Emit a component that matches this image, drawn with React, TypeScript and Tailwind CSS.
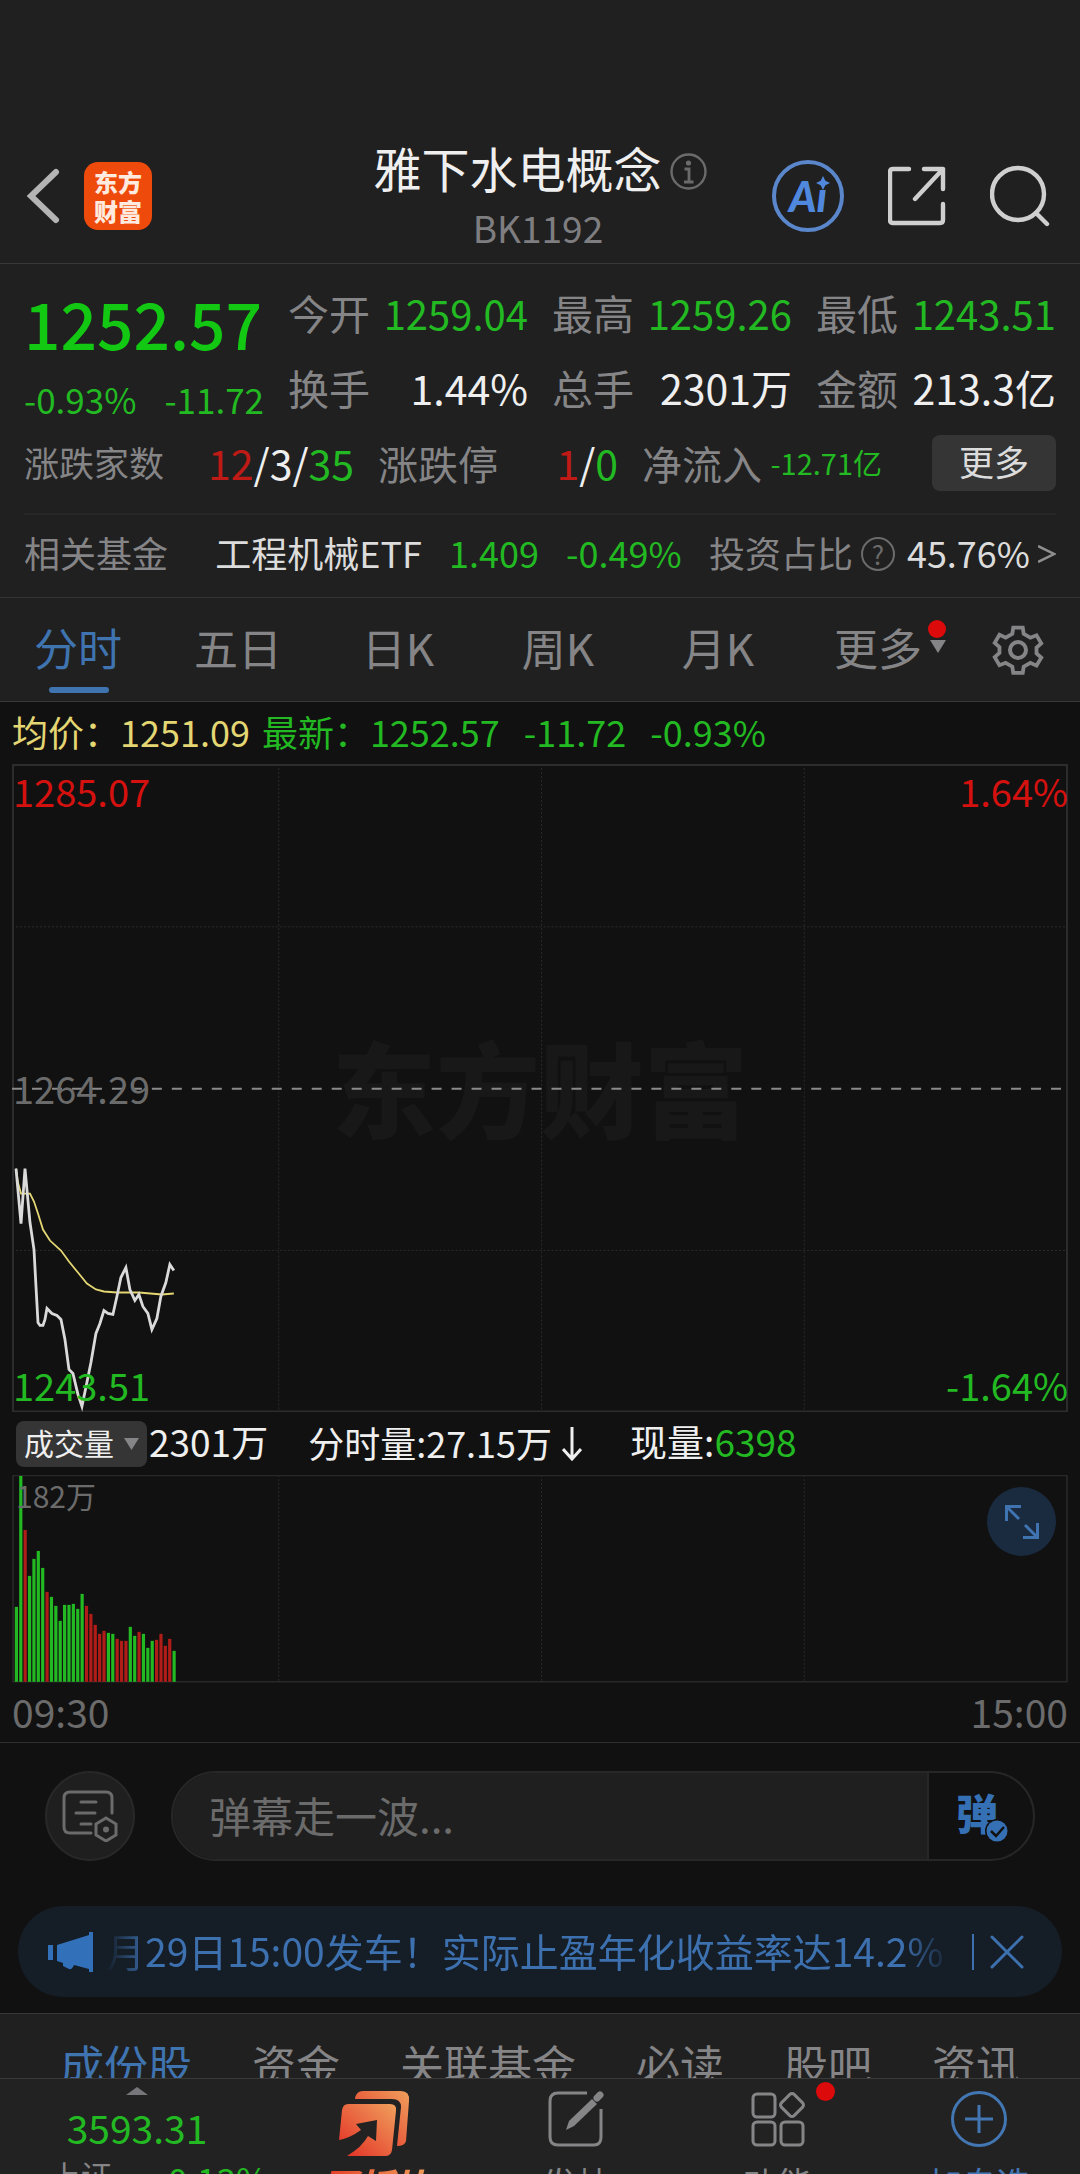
import { useState } from 'react';

const GREEN = '#22b922';
const RED = '#b01c17';

// minute volumes, in chart units (full height = 207)
const volumes = [
  75, 206, 152, 106, 123, 131, 114, 90, 85, 76, 61, 77, 77, 78, 73, 88, 76, 68, 57, 48, 51, 49, 48, 43, 41, 41, 55, 46,
  50, 48, 34, 41, 42, 48, 36, 43, 31,
];
const volumeSides = 'ggrggggrggggggggrrrrrggrrrggrgggrrrrg';

const quotes = [
  { label: '今开', value: '1259.04', color: 'text-[40px] text-[#22b922]' },
  { label: '最高', value: '1259.26', color: 'text-[40px] text-[#22b922]' },
  { label: '最低', value: '1243.51', color: 'text-[40px] text-[#22b922]' },
  { label: '换手', value: '1.44%', color: 'text-[#efefef]' },
  { label: '总手', value: '2301万', color: 'text-[#efefef]' },
  { label: '金额', value: '213.3亿', color: 'text-[#efefef]' },
];

const periods = ['分时', '五日', '日K', '周K', '月K'];
const sections = ['成份股', '资金', '关联基金', '必读', '股吧', '资讯'];

function Header() {
  return (
    <header className="grid grid-cols-[1fr_auto_1fr] items-center border-b border-[#383838] px-6 pt-[135px] pb-2">
      <div className="flex items-center gap-6 pt-0.5">
        <button aria-label="返回" className="text-[#b4b4b4]">
          <svg width="36" height="56" viewBox="0 0 36 56" fill="none" stroke="currentColor" strokeWidth="6" strokeLinecap="round">
            <path d="M32 4 7 28l25 24" />
          </svg>
        </button>
        <a href="#" className="grid size-[68px] place-content-center rounded-[14px] bg-[#ee4a0b] text-center text-[24px] leading-[29px] font-black text-[#ffeadf]">
          东方
          <br />
          财富
        </a>
      </div>
      <div className="text-center">
        <h1 className="flex items-center gap-2 text-[48px] leading-[64px] text-[#efefef]">
          雅下水电概念
          <svg className="mt-2" width="37" height="37" viewBox="0 0 37 37" fill="none" stroke="#6b6b6b" strokeWidth="2.4">
            <circle cx="18.500" cy="18.500" r="17" />
            <circle cx="18.500" cy="10" r="2.600" fill="#6b6b6b" stroke="none" />
            <path d="M14.500 16h4.500v12.500M14 29h9.500" strokeWidth="2.800" />
          </svg>
        </h1>
        <p className="pr-1 text-[37px] leading-[56px] text-[#7e7e80]">BK1192</p>
      </div>
      <div className="flex items-center justify-end gap-11 pt-0.5 pr-1.5">
        <button className="relative grid size-[72px] place-content-center rounded-full border-4 border-[#5a86cc] font-[Lato] text-[42px] leading-none font-black text-[#5088de] italic">
          Aı
          <svg className="absolute top-3 right-2.5" width="14" height="14" viewBox="0 0 12 12" fill="currentColor">
            <path d="M6 0 8 4l4 2-4 2-2 4-2-4-4-2 4-2z" />
          </svg>
        </button>
        <button aria-label="分享" className="text-[#cfcfcf]">
          <svg width="58" height="60" viewBox="0 0 58 60" fill="none" stroke="currentColor" strokeWidth="4.400" strokeLinecap="round" strokeLinejoin="round">
            <path d="M21 3H5q-3 0-3 3v48q0 3 3 3h47q3 0 3-3V38M36 3h19v20M55 3 27 33" />
          </svg>
        </button>
        <button aria-label="搜索" className="text-[#cfcfcf]">
          <svg width="60" height="62" viewBox="0 0 60 62" fill="none" stroke="currentColor" strokeWidth="4.400" strokeLinecap="round">
            <circle cx="28" cy="29" r="26" />
            <path d="M46 48 57 59" />
          </svg>
        </button>
      </div>
    </header>
  );
}

function Summary() {
  return (
    <section className="border-b border-[#333] px-6 pt-[11px]">
      <div className="grid grid-cols-4 gap-x-6">
        <div className="row-span-2 pt-[7px] whitespace-nowrap">
          <div className="text-[64px] leading-[80px] font-medium text-[#12c812]">1252.57</div>
          <div className="mt-2 flex justify-between pt-1 text-[35px] leading-[50px] text-[#22b922]">
            <span>-0.93%</span>
            <span>-11.72</span>
          </div>
        </div>
        {quotes.map((q) => (
          <div key={q.label} className="flex h-[75px] items-center justify-between text-[41px] whitespace-nowrap">
            <span className="text-[#858587]">{q.label}</span>
            <span className={q.color}>{q.value}</span>
          </div>
        ))}
      </div>
      <div className="grid h-[75px] grid-cols-[11fr_8fr_8fr_5fr] items-center gap-x-6 text-[41px] whitespace-nowrap">
        <div className="flex items-center justify-between">
          <span className="text-[35px] text-[#858587]">涨跌家数</span>
          <span className="text-[#efefef]">
            <span className="text-[#c01a16]">12</span>/3/<span className="text-[#22b922]">35</span>
          </span>
        </div>
        <div className="flex items-center justify-between">
          <span className="text-[40px] text-[#858587]">涨跌停</span>
          <span className="text-[#efefef]">
            <span className="text-[#c01a16]">1</span>/<span className="text-[#22b922]">0</span>
          </span>
        </div>
        <div className="flex items-center justify-between">
          <span className="text-[40px] text-[#858587]">净流入</span>
          <span className="text-[29px] text-[#22b922]">-12.71亿</span>
        </div>
        <button className="h-[56px] w-[124px] justify-self-end rounded-lg bg-[#353535] pb-1 text-[35px] leading-[48px] text-[#dcdcdc]">更多</button>
      </div>
      <div className="mt-[13px] flex h-[84px] items-center justify-between border-t-2 border-[#272727] pb-2 text-[36px] whitespace-nowrap">
        <span className="mr-5 text-[#858587]">相关基金</span>
        <a href="#" className="text-[#dcdcdc]">工程机械ETF</a>
        <span className="text-[#22b922]">1.409</span>
        <span className="text-[#22b922]">-0.49%</span>
        <span className="flex items-center gap-2 text-[#dcdcdc]">
          <span className="text-[#858587]">投资占比</span>
          <span className="mt-1 mr-1 grid size-[34px] place-content-center rounded-full border-2 border-[#6b6b6b] text-[26px] leading-none text-[#6b6b6b]">?</span>
          45.76%
          <svg className="mt-1" width="18" height="18" viewBox="0 0 18 18" fill="none" stroke="#8e8e8e" strokeWidth="2.500">
            <path d="m0 1 16 8-16 8" />
          </svg>
        </span>
      </div>
    </section>
  );
}

function PeriodTabs() {
  const [active, setActive] = useState('分时');
  return (
    <nav className="grid h-[104px] grid-cols-[repeat(6,4fr)_3fr] border-b border-[#383838] text-[44px] text-[#858587]">
      {periods.map((p) => (
        <button key={p} onClick={() => setActive(p)} className={p === active ? 'relative pr-1 pb-1.5 text-[#3f74b0]' : 'pr-1 pb-1.5'}>
          {p}
          {p === active && <span className="absolute bottom-2 left-[49px] h-1.5 w-[60px] rounded-full bg-[#3f74b0]" />}
        </button>
      ))}
      <button className="relative flex items-center justify-center gap-2 pb-1.5 pl-5 whitespace-nowrap">
        更多
        <svg width="16" height="13" viewBox="0 0 16 13" fill="currentColor">
          <path d="M0 0h16L8 13z" />
        </svg>
        <span className="absolute top-[22px] right-3.5 size-[18px] rounded-full bg-[#dc0a0a]" />
      </button>
      <button aria-label="设置" className="flex items-center justify-center pr-1">
        <svg width="52" height="52" viewBox="0 0 52 52" fill="none" stroke="currentColor" strokeWidth="4">
          <path d="M21 2.500h10l1 6.500 7 4 6.500-2.500 5 8.500-5 4.500v6l5 4.500-5 8.500L39 39.500l-7 4-1 6.500H21l-1-6.500-7-4-6.500 2.500-5-8.500 5-4.500v-6l-5-4.500 5-8.500L13 13l7-4z" transform="translate(1.300 1.300) scale(.95)" />
          <circle cx="26" cy="26" r="8" />
        </svg>
      </button>
    </nav>
  );
}

function PriceChart() {
  return (
    <div className="relative mx-3 text-[38px] leading-[50px]">
      <div className="absolute inset-0 flex items-center justify-center pb-1 text-[104px] leading-none font-black text-[#181818]">东方财富</div>
      <svg className="relative block w-full" viewBox="0 0 1057 649" fill="none">
        <g stroke="#2b2b2b" strokeWidth="2" strokeDasharray="2 2">
          <path d="M0 163h1057M0 487h1057M267 0v649M530 0v649M793 0v649" strokeWidth="1" />
        </g>
        <path d="M1 1h1055v647H1z" stroke="#2d2d2d" strokeWidth="2" />
        <path d="M0 325h1057" stroke="#8a8a8a" strokeWidth="2" strokeDasharray="10 10" />
        {/* average price */}
        <path
          d="M4 405 6 419 9 430 18 430 22 438 26 450 31 466 38 477 49 487 57 498 66 509 75 520 84 526 92 528 105 529 114 529 127 529 150 531 162 530"
          stroke="#e3d673"
          strokeWidth="1.800"
        />
        {/* last price */}
        <path
          d="M4 405 9 460 13 405 18 459 22 486 24 523 26 559 28 562 31 562 33 556 35 545 40 550 45 552 49 556 53 576 57 606 61 610 66 631 70 643 75 619 79 599 84 570 88 560 92 547 96 550 101 551 105 533 109 514 114 504 118 526 123 537 127 531 131 543 136 550 140 566 145 555 149 533 154 519 158 501 162 507"
          stroke="#dadada"
          strokeWidth="2.800"
        />
      </svg>
      <span className="absolute top-0.5 left-px text-[#d4110f]">1285.07</span>
      <span className="absolute top-0.5 right-0 text-[#d4110f]">1.64%</span>
      <span className="absolute top-1/2 left-px -translate-y-1/2 text-[#6b6b6b]">1264.29</span>
      <span className="absolute bottom-0.5 left-px text-[#22b922]">1243.51</span>
      <span className="absolute right-0 bottom-0.5 text-[#22b922]">-1.64%</span>
    </div>
  );
}

function VolumeChart() {
  return (
    <>
      <div className="flex h-[63px] items-center px-4 text-[37px] whitespace-nowrap text-[#efefef]">
        <div className="relative mr-0.5">
          <select aria-label="指标" className="block h-[46px] w-[131px] appearance-none rounded-lg bg-[#353535] pb-1 pl-2 text-[30px] leading-[42px]">
            <option>成交量</option>
            <option>成交额</option>
          </select>
          <svg className="pointer-events-none absolute top-[17px] right-2" width="15" height="12" viewBox="0 0 15 12" fill="#858587">
            <path d="M0 0h15L7.500 12z" />
          </svg>
        </div>
        <span className="pb-1">2301万</span>
        <span className="pb-1 pl-10 text-[36px]">分时量:27.15万</span>
        <svg className="ml-2.5" width="20" height="34" viewBox="0 0 20 34" fill="none" stroke="currentColor" strokeWidth="3">
          <path d="M10 0v32M1 22l9 10 9-10" />
        </svg>
        <span className="pb-1 pl-12">
          现量:<span className="text-[#22b922]">6398</span>
        </span>
      </div>
      <div className="relative mx-3">
        <svg className="block w-full" viewBox="0 0 1057 208" fill="none">
          <path d="M267 0v208M530 0v208M793 0v208" stroke="#2b2b2b" strokeDasharray="2 2" />
          <path d="M1 .5h1055v206.500H1z" stroke="#292929" strokeWidth="1.600" />
          {volumes.map((v, i) => (
            <rect key={i} x={2.8 + i * 4.385} y={207 - v} width="3.200" height={v} fill={volumeSides[i] === 'g' ? GREEN : RED} />
          ))}
        </svg>
        <span className="absolute top-0 left-1 text-[30px] leading-[40px] text-[#6b6b6b]">182万</span>
        <button aria-label="全屏" className="absolute top-3 right-3 grid size-[69px] place-content-center rounded-full bg-[#1a2a3f]">
          <svg width="34" height="34" viewBox="0 0 34 34" fill="none" stroke="#3f74b0" strokeWidth="3">
            <path d="M16 1.500H1.500V16M2 2l12 12M18 32.500h14.500V18M32 32 20 20" />
          </svg>
        </button>
      </div>
      <div className="flex h-[60px] justify-between border-b border-[#2f2f2f] px-3 text-[39px] leading-[56px] text-[#6b6b6b]">
        <span>09:30</span>
        <span>15:00</span>
      </div>
    </>
  );
}

function Barrage() {
  return (
    <div className="flex h-[90px] gap-[36px] pr-[45px] pl-[45px]">
      <button aria-label="弹幕设置" className="grid size-[90px] shrink-0 place-content-center rounded-full border-2 border-[#282828] bg-[#1f1f1f]">
        <svg width="56" height="52" viewBox="0 0 56 52" fill="none" stroke="#6b6b6b" strokeWidth="3">
          <path d="M29 43H8q-6 0-6-6V8q0-6 6-6h36q6 0 6 6v15M19 12h15M14 23h19M19 34h10" strokeLinecap="round" />
          <path d="m44 28 10 6v11l-10 6-10-6V34z" />
          <circle cx="44" cy="39.500" r="3" fill="#6b6b6b" stroke="none" />
        </svg>
      </button>
      <form className="flex min-w-0 flex-1 overflow-hidden rounded-full border-2 border-[#272727]">
        <input aria-label="弹幕" placeholder="弹幕走一波..." className="min-w-0 flex-1 bg-[#1f1f1f] pb-1 pl-9 text-[42px] outline-none placeholder:text-[#6b6b6b]" />
        <button type="button" className="relative w-[106px] border-l-2 border-[#272727] pr-2 pb-2 text-[42px] leading-none font-black text-[#3670b4]">
          弹
          <svg className="absolute right-[24px] bottom-4" width="24" height="24" viewBox="0 0 24 24">
            <circle cx="12" cy="12" r="12" fill="#111" />
            <circle cx="12" cy="12" r="10.500" fill="#3670b4" />
            <path d="m6 12 5 5 8-9" stroke="#111" strokeWidth="2.500" fill="none" />
          </svg>
        </button>
      </form>
    </div>
  );
}

function Notice() {
  const [open, setOpen] = useState(true);
  if (!open) return null;
  return (
    <div className="mx-[18px] mt-[45px] mb-4 flex h-[91px] items-center rounded-full bg-[#151d27] pr-[38px] pl-[30px] text-[#3d70ae]">
      <svg className="shrink-0" width="46" height="40" viewBox="0 0 46 40" fill="#3270b9">
        <path d="M0 13h5v15H0zM9 13 41 3V0h4v40h-4v-3l-15-4q-2 5-5 4l-6-3v-3l-6-2z" />
      </svg>
      <p className="ml-3 min-w-0 flex-1 overflow-hidden pb-1 text-[39px] leading-[56px] whitespace-nowrap [mask-image:linear-gradient(to_right,transparent,black_44px,black_calc(100%_-_50px),transparent)]">
        月29日15:00发车！实际止盈年化收益率达14.2%，
      </p>
      <span className="mr-4 ml-5 h-9 w-0.5 bg-[#3d70ae]" />
      <button aria-label="关闭" onClick={() => setOpen(false)}>
        <svg width="34" height="34" viewBox="0 0 34 34" fill="none" stroke="currentColor" strokeWidth="3" strokeLinecap="round">
          <path d="m2 2 30 30M32 2 2 32" />
        </svg>
      </button>
    </div>
  );
}

function BottomBar() {
  return (
    <footer className="grid h-24 shrink-0 grid-cols-[68fr_50fr_50fr_50fr_50fr] overflow-hidden border-t border-[#3a3a3a] bg-[#222] text-[34px] leading-[40px] whitespace-nowrap text-[#858587]">
      <div className="flex flex-col items-center pt-2">
        <svg className="shrink-0" width="22" height="8" viewBox="0 0 22 8" fill="#77777b">
          <path d="M11 0 22 8H0z" />
        </svg>
        <span className="mt-1 text-[39px] leading-[56px] text-[#22b922]">3593.31</span>
        <span className="flex gap-11 pl-11 text-[31px]">
          上证 <span className="pt-1 text-[35px] text-[#22b922]">-0.13%</span>
        </span>
      </div>
      <button className="flex flex-col items-center pt-3">
        <svg className="mb-2 shrink-0" width="71" height="65" viewBox="0 0 71 65">
          <defs>
            <linearGradient id="fire" x1="0" y1="1" x2="1" y2="0">
              <stop offset="0" stopColor="#e22c23" />
              <stop offset="1" stopColor="#f0a05d" />
            </linearGradient>
          </defs>
          <path d="M16 8q1-8 8-8h38q9 0 8 10l-3 40q-1 5-9 5l4-39q0-8-9-8z" fill="url(#fire)" />
          <path d="M9 13h42q7 0 6 7l-4 39q-1 6-7 6H8q15-9 21-20l8 5 1-21-21 4 5 6Q11 47 0 49l3-30q1-6 6-6z" fill="url(#fire)" />
        </svg>
        <span className="bg-linear-to-r from-[#e22c23] to-[#f0a05d] bg-clip-text px-1 text-[36px] font-black text-transparent italic">买板块</span>
      </button>
      <button className="flex flex-col items-center pt-3">
        <svg className="mb-4 shrink-0" width="56" height="56" viewBox="0 0 56 56" fill="none" stroke="currentColor" strokeWidth="3">
          <path d="M39 2H10q-8 0-8 8v36q0 8 8 8h36q7 0 7-8V18" />
          <path d="M18 39 21 30 44 8l5 5-23 22z" fill="currentColor" stroke="none" />
          <path d="m49 7 3-3" strokeWidth="7" strokeLinecap="round" />
        </svg>
        发帖
      </button>
      <button className="relative flex flex-col items-center pt-3">
        <svg className="mb-4 shrink-0" width="56" height="56" viewBox="0 0 56 56" fill="none" stroke="currentColor" strokeWidth="3">
          <rect x="3" y="3" width="22" height="23" rx="4" />
          <rect x="3" y="31" width="22" height="23" rx="4" />
          <rect x="31" y="31" width="22" height="23" rx="4" />
          <rect x="33" y="5" width="18" height="18" rx="3" transform="rotate(45 42 14)" />
        </svg>
        功能
        <span className="absolute top-[3px] right-11 size-[19px] rounded-full bg-[#dc0a0a]" />
      </button>
      <button className="flex flex-col items-center pt-3 text-[#4377b3]">
        <svg className="mb-4 shrink-0" width="56" height="56" viewBox="0 0 56 56" fill="none" stroke="currentColor" strokeWidth="3">
          <circle cx="28" cy="28" r="26.500" />
          <path d="M14 28h28M28 14v28" />
        </svg>
        加自选
      </button>
    </footer>
  );
}

export default function App() {
  return (
    <div className="flex h-screen flex-col overflow-hidden bg-[#111] font-['Noto_Sans_CJK_SC',sans-serif]">
      <main className="flex-1 overflow-hidden">
        <div className="bg-[#202020]">
          <Header />
          <Summary />
          <PeriodTabs />
        </div>
        <div className="flex h-[62px] items-center gap-6 px-3 pb-1 text-[36px] whitespace-nowrap text-[#22b922]">
          <span>
            <span className="mr-3 text-[#e3d673]">均价：1251.09</span>最新：1252.57
          </span>
          <span>-11.72</span>
          <span>-0.93%</span>
        </div>
        <PriceChart />
        <VolumeChart />
        <div className="pt-7">
          <Barrage />
          <Notice />
        </div>
        <nav className="flex gap-[60px] border-t border-[#383838] bg-[#202020] px-[60px] pt-[18px] text-[44px] leading-[64px] whitespace-nowrap text-[#858587]">
          {sections.map((s, i) => (
            <a key={s} href="#" className={i === 0 ? 'text-[#3f74b0]' : ''}>
              {s}
            </a>
          ))}
        </nav>
      </main>
      <BottomBar />
    </div>
  );
}
